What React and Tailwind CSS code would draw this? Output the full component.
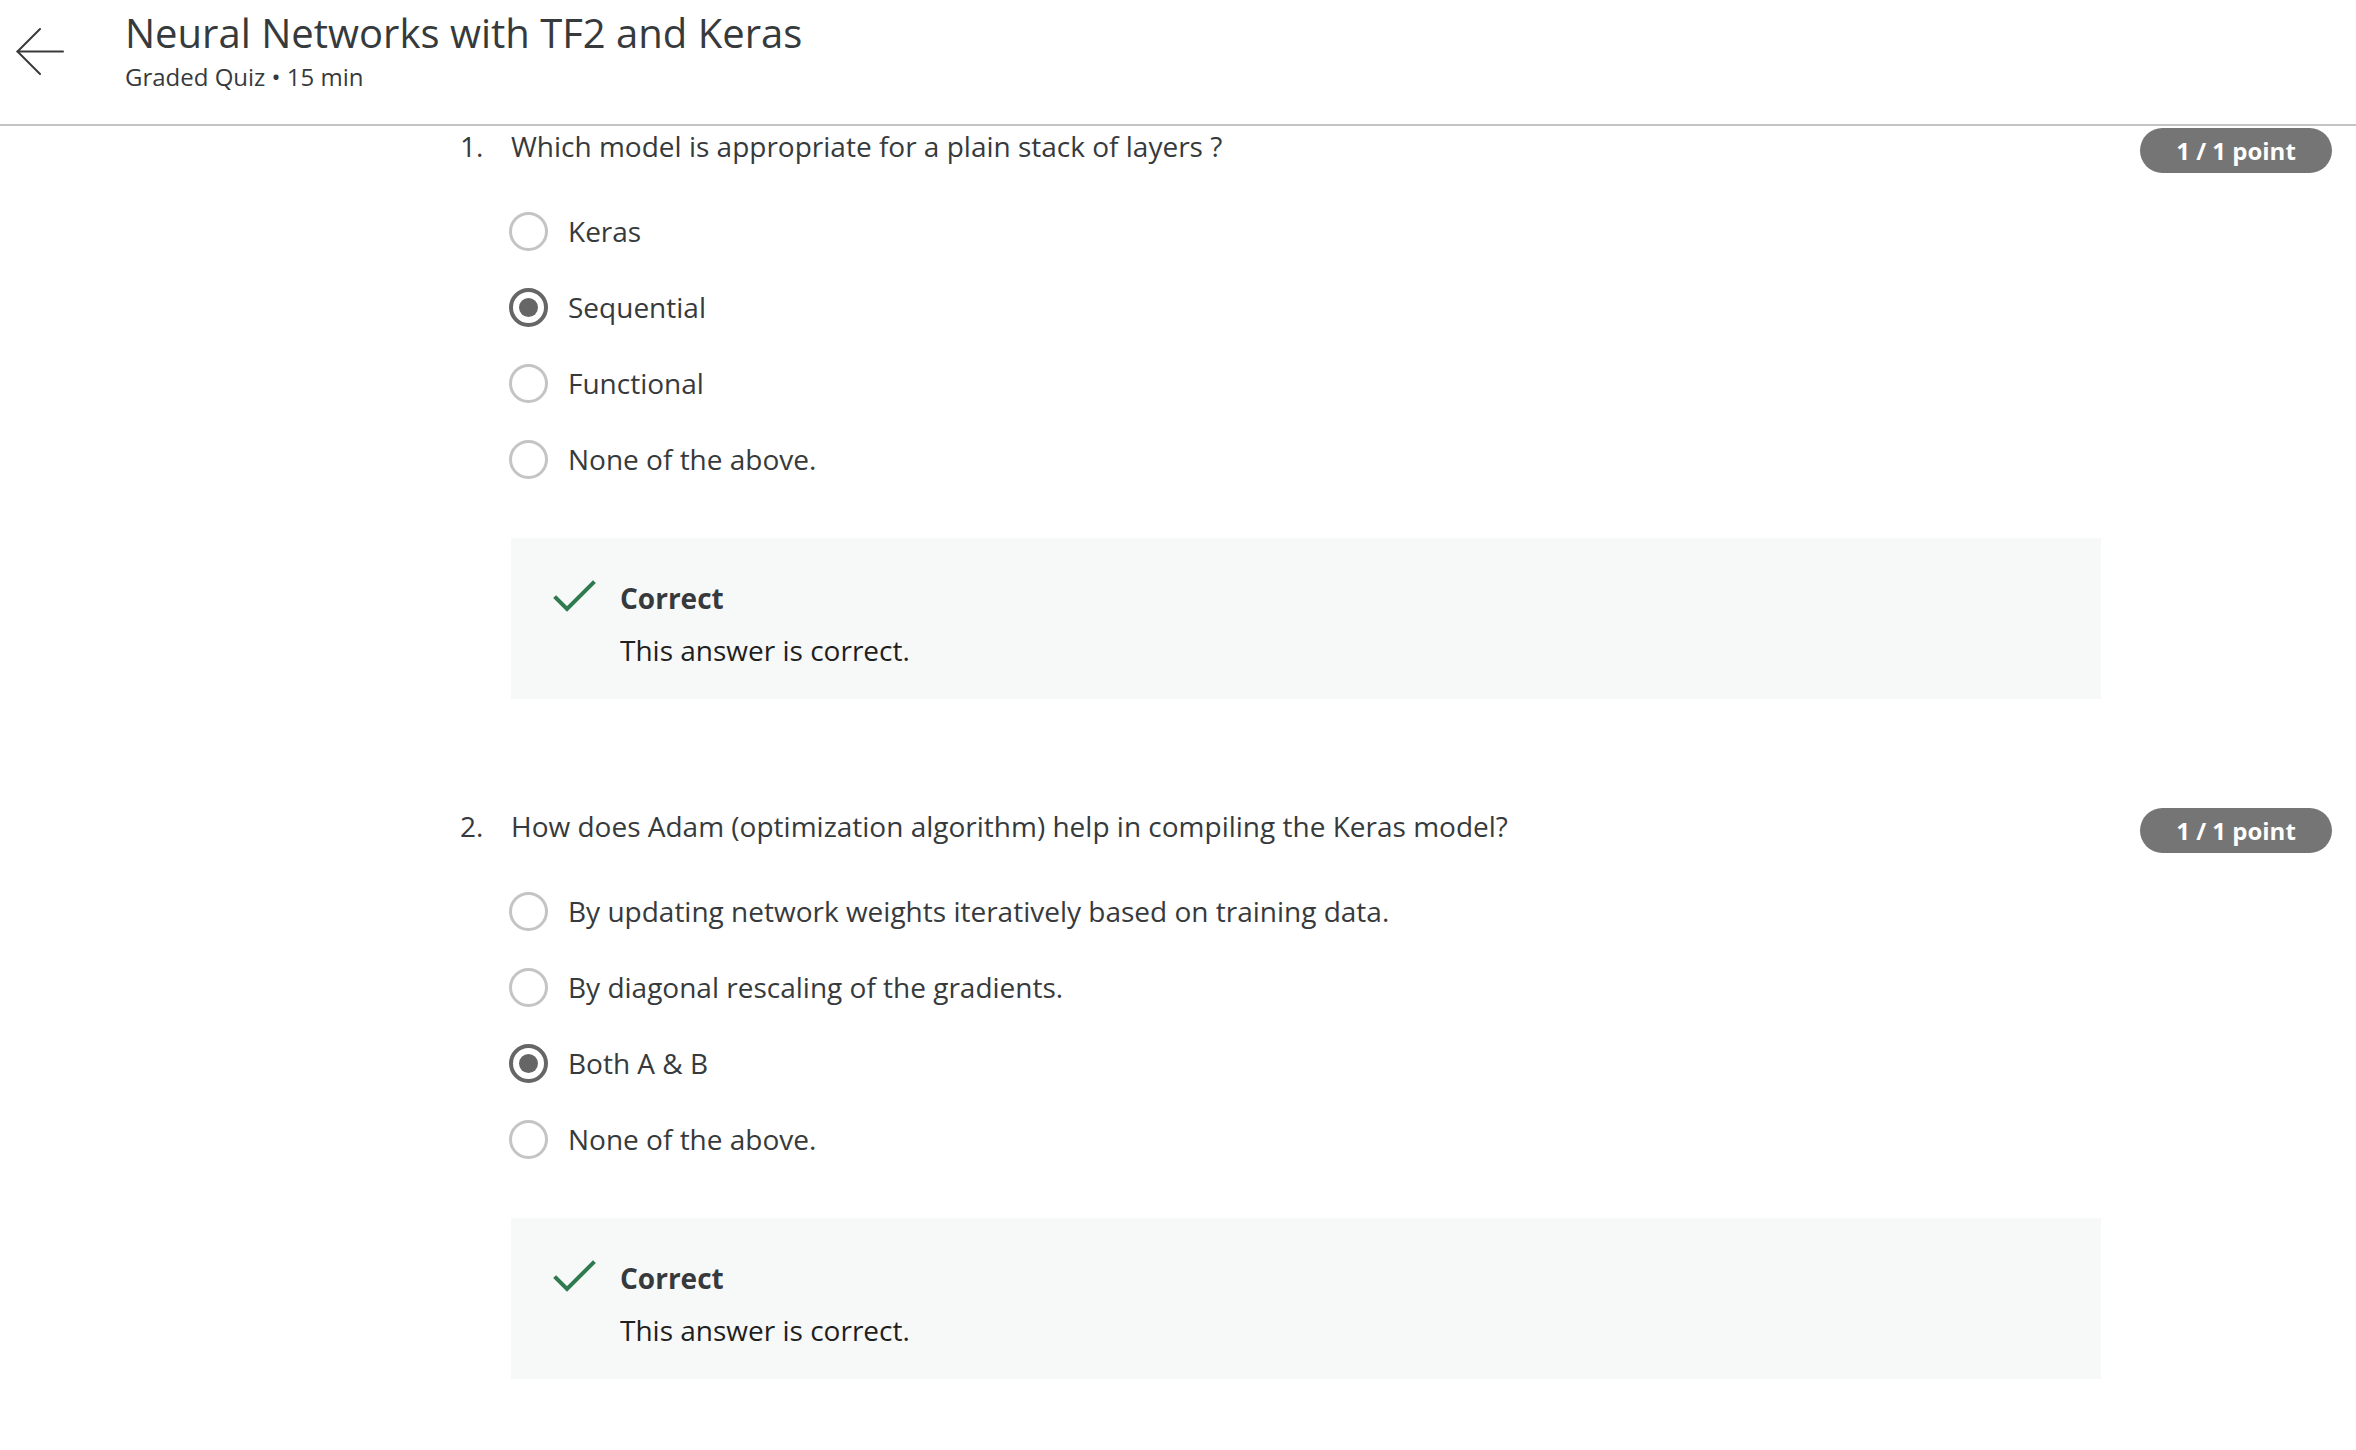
import { Fragment } from "react";

const questions = [
    {
        number: "1.",
        text: "Which model is appropriate for a plain stack of layers ?",
        options: ["Keras", "Sequential", "Functional", "None of the above."],
        selected: 1,
    },
    {
        number: "2.",
        text: "How does Adam (optimization algorithm) help in compiling the Keras model?",
        options: [
            "By updating network weights iteratively based on training data.",
            "By diagonal rescaling of the gradients.",
            "Both A & B",
            "None of the above.",
        ],
        selected: 2,
    },
];

function BackArrow() {
    return (
        <svg width="48" height="48" viewBox="0 0 48 48" fill="none" stroke="#3a3a3a" strokeWidth="2" strokeLinecap="round">
            <path d="M24 1 L1.5 23.5 L24 46" />
            <path d="M1.5 23.5 H47" />
        </svg>
    );
}

function Radio({ checked }) {
    if (checked) {
        return (
            <span className="flex items-center justify-center w-[39px] h-[39px] rounded-full border-[4px] border-[#666666] shrink-0">
                <span className="w-[19px] h-[19px] rounded-full bg-[#666666]" />
            </span>
        );
    }
    return <span className="w-[39px] h-[39px] rounded-full border-[3px] border-[#c4c4c4] shrink-0" />;
}

function CheckIcon() {
    return (
        <svg width="44" height="36" viewBox="0 0 44 36" fill="none" stroke="#2f7a4f" strokeWidth="4" strokeLinecap="square">
            <path d="M3 19 L14 30 L40 4" />
        </svg>
    );
}

function Question({ q }) {
    return (
        <div className="flex items-start pl-[460px] pr-[24px]">
            <div className="w-[51px] text-[28px] leading-[39px] text-[#373a3c]">{q.number}</div>
            <div className="flex-1">
                <p className="text-[28px] leading-[39px] text-[#373a3c]">{q.text}</p>
                <div className="mt-[27px]">
                    {q.options.map((opt, i) => (
                        <div key={opt} className="flex items-center h-[76px] -ml-[2px]">
                            <Radio checked={i === q.selected} />
                            <span className="ml-[20px] text-[28px] text-[#373a3c]">{opt}</span>
                        </div>
                    ))}
                </div>
                <div className="mt-[41px] h-[161px] bg-[#f7f8f8] flex items-start pl-[42px] pt-[41px]">
                    <div className="w-[67px] shrink-0">
                        <CheckIcon />
                    </div>
                    <div>
                        <div className="text-[28px] leading-[39px] font-bold text-[#373a3c]">Correct</div>
                        <div className="mt-[13px] text-[28px] leading-[39px] text-[#1f1f1f]">This answer is correct.</div>
                    </div>
                </div>
            </div>
            <div className="ml-[39px] mt-[1px] w-[192px] h-[45px] rounded-full bg-[#757575] flex items-center justify-center text-white font-bold text-[24px]">
                1 / 1 point
            </div>
        </div>
    );
}

export default function App() {
    return (
        <div className="min-h-screen bg-white font-['Open_Sans',sans-serif]">
            <header className="h-[126px] border-b-2 border-[#c4c4c4] flex items-start">
                <div className="pl-[16px] pt-[28px] w-[125px]">
                    <BackArrow />
                </div>
                <div className="pt-[8px]">
                    <h1 className="text-[40px] leading-[50px] text-[#373a3c]">Neural Networks with TF2 and Keras</h1>
                    <p className="mt-[2px] text-[24px] leading-[33px] text-[#373a3c]">Graded Quiz • 15 min</p>
                </div>
            </header>
            <main className="pt-[1px]">
                {questions.map((q, i) => (
                    <Fragment key={q.number}>
                        {i > 0 && <div className="h-[108px]" />}
                        <Question q={q} />
                    </Fragment>
                ))}
            </main>
        </div>
    );
}
